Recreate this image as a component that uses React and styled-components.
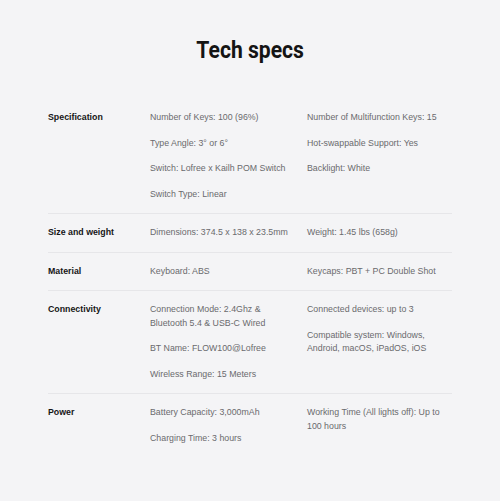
import React from "react";
import styled, { createGlobalStyle } from "styled-components";

const Global = createGlobalStyle`
  html, body { margin: 0; padding: 0; background: #f4f4f6; }
  body { font-family: "Liberation Sans", Arial, sans-serif; }
`;

const Page = styled.div`
  width: 500px;
  min-height: 501px;
  background: #f4f4f6;
  padding: 36px 48px 0;
  box-sizing: border-box;
`;

const Title = styled.h1`
  margin: 0 0 35px;
  text-align: center;
  font-family: Roboto, "Liberation Sans", sans-serif;
  font-weight: 700;
  font-size: 24px;
  line-height: 28px;
  color: #141414;
`;

const TitleText = styled.span`
  display: inline-block;
  transform: scaleX(0.88);
`;

const Row = styled.div`
  display: grid;
  grid-template-columns: 90px 1fr 1fr;
  column-gap: 12px;
  padding: 12px 0 12px;
  border-bottom: ${(p) => (p.$last ? "none" : "1px solid #e6e6e9")};
`;

const Label = styled.div`
  font-weight: 700;
  font-size: 8.8px;
  line-height: 13.5px;
  color: #161616;
`;

const Col = styled.div`
  display: flex;
  flex-direction: column;
  gap: 12px;
`;

const Item = styled.div`
  font-size: 8.8px;
  line-height: 13.5px;
  color: #6a6a6d;
`;

const specs = [
  {
    label: "Specification",
    a: [
      "Number of Keys: 100 (96%)",
      "Type Angle: 3° or 6°",
      "Switch: Lofree x Kailh POM Switch",
      "Switch Type: Linear",
    ],
    b: [
      "Number of Multifunction Keys: 15",
      "Hot-swappable Support: Yes",
      "Backlight: White",
    ],
  },
  {
    label: "Size and weight",
    a: ["Dimensions: 374.5 x 138 x 23.5mm"],
    b: ["Weight: 1.45 lbs (658g)"],
  },
  {
    label: "Material",
    a: ["Keyboard: ABS"],
    b: ["Keycaps: PBT + PC Double Shot"],
  },
  {
    label: "Connectivity",
    a: [
      "Connection Mode: 2.4Ghz & Bluetooth 5.4 & USB-C Wired",
      "BT Name: FLOW100@Lofree",
      "Wireless Range: 15 Meters",
    ],
    b: [
      "Connected devices: up to 3",
      "Compatible system: Windows, Android, macOS, iPadOS, iOS",
    ],
  },
  {
    label: "Power",
    a: ["Battery Capacity: 3,000mAh", "Charging Time: 3 hours"],
    b: ["Working Time (All lights off): Up to 100 hours"],
  },
];

export default function App() {
  return (
    <>
      <Global />
      <Page>
        <Title>
          <TitleText>Tech specs</TitleText>
        </Title>
        {specs.map((s, i) => (
          <Row key={s.label} $last={i === specs.length - 1}>
            <Label>{s.label}</Label>
            <Col>
              {s.a.map((t) => (
                <Item key={t}>{t}</Item>
              ))}
            </Col>
            <Col>
              {s.b.map((t) => (
                <Item key={t}>{t}</Item>
              ))}
            </Col>
          </Row>
        ))}
      </Page>
    </>
  );
}
